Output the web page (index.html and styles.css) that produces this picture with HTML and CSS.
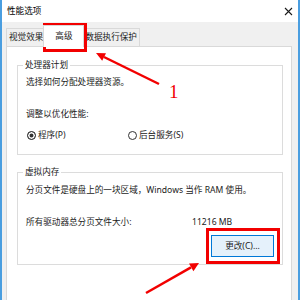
FILE: index.html
```html
<!DOCTYPE html>
<html lang="zh-CN">
<head>
    <meta charset="UTF-8">
    <title>性能选项</title>
<link rel="stylesheet" href="styles.css">
</head>
<body>
    <div class="window">
        <div class="titlebar">
            <span class="title">性能选项</span>
            <svg class="close" width="9" height="9" viewBox="0 0 9 9">
                <path d="M1 1 L8 8 M8 1 L1 8" stroke="#1a1a1a" stroke-width="1.1" fill="none"/>
            </svg>
        </div>
        <div class="content">
            <div class="tabs">
                <span class="tab">视觉效果</span>
                <span class="tab active">高级</span>
                <span class="tab">数据执行保护</span>
            </div>
            <div class="panel">
                <div class="group">
                    <span class="group-title">处理器计划</span>
                    <p class="line first">选择如何分配处理器资源。</p>
                    <p class="line">调整以优化性能:</p>
                    <div class="radios">
                        <label class="radio"><span class="dot checked"></span>程序(P)</label>
                        <label class="radio"><span class="dot"></span>后台服务(S)</label>
                    </div>
                </div>
                <div class="group memory">
                    <span class="group-title">虚拟内存</span>
                    <p class="line first">分页文件是硬盘上的一块区域，Windows 当作 RAM 使用。</p>
                    <p class="line size"><span class="size-label">所有驱动器总分页文件大小:</span><span>11216 MB</span></p>
                    <div class="actions">
                        <button class="btn">更改(C)...</button>
                    </div>
                </div>
            </div>
        </div>
    </div>

    <!-- annotations drawn over the screenshot -->
    <div class="mark mark-tab"></div>
    <div class="mark mark-btn"></div>
    <span class="step">1</span>
    <svg class="arrows" width="200" height="300" viewBox="0 0 200 300">
        <line x1="159" y1="84" x2="104" y2="57" stroke="#f20000" stroke-width="2.5"/>
        <polygon points="96,53 106,53.2 102.2,60.8" fill="#f20000"/>
        <line x1="146" y1="293" x2="191" y2="267.4" stroke="#f20000" stroke-width="2.5"/>
        <polygon points="199,263 193.4,271.2 189,263.6" fill="#f20000"/>
    </svg>
</body>
</html>
```

FILE: styles.css
```css
* {
    margin: 0;
    padding: 0;
    box-sizing: border-box;
}
body {
    position: relative;
    width: 300px;
    height: 300px;
    overflow: hidden;
    font-family: "Noto Sans", "Noto Sans CJK SC", sans-serif;
    font-size: 8.6px;
    color: #1b1b1b;
    background: #f0f0f0;
}
.window {
    height: 300px;
    overflow: hidden;
    border-left: 2px solid #4a9ee0;
    border-right: 2px solid #4a9ee0;
    background: #f0f0f0;
}
.titlebar {
    position: relative;
    z-index: 3;
    display: flex;
    align-items: center;
    height: 22px;
    padding: 0 5px 0 5px;
    background: #fff;
    color: #000;
    line-height: 12px;
}
.title {
    flex: 1;
}
.close {
    display: block;
    flex: none;
}
.content {
    padding: 0 6px 0 4px;
}
.tabs {
    display: flex;
    align-items: flex-end;
    height: 24px;
}
.tab {
    min-width: 37px;
    height: 18px;
    padding: 0 2px;
    margin-right: -1px;
    border: 1px solid #d9d9d9;
    border-bottom: none;
    background: #f0f0f0;
    line-height: 17px;
    text-align: center;
    white-space: nowrap;
}
.tab.active {
    position: relative;
    z-index: 1;
    min-width: 41px;
    height: 22px;
    margin: 0 -2px -1px -2px;
    background: #fff;
    line-height: 21px;
}
.panel {
    height: 270px;
    padding: 18px 8px 0 10px;
    background: #fff;
    border: 1px solid #d9d9d9;
}
.group {
    padding: 0 8px 13px 8px;
    border: 1px solid #dcdcdc;
    line-height: 12px;
}
.group-title {
    display: block;
    width: max-content;
    margin: -7px 0 0 -3px;
    padding: 0 2px;
    background: #fff;
}
.line {
    margin-top: 20px;
    white-space: nowrap;
}
.line.first {
    margin-top: 5px;
}
.radios {
    display: flex;
    align-items: center;
    margin-top: 9px;
    padding-left: 1px;
}
.radio {
    display: flex;
    align-items: center;
    gap: 2px;
}
.radio:first-child {
    width: 101px;
}
.dot {
    width: 9px;
    height: 9px;
    border: 1px solid #333;
    border-radius: 50%;
    background: #fff;
}
.dot.checked {
    background: #333;
    box-shadow: inset 0 0 0 1.5px #fff;
}
.memory {
    margin-top: 17px;
    padding-bottom: 7px;
}
.memory .first {
    margin-top: 6px;
}
.size {
    display: flex;
}
.size-label {
    width: 166px;
}
.actions {
    display: flex;
    justify-content: flex-end;
    margin-top: 7px;
}
.btn {
    width: 63px;
    height: 22px;
    border: 1px solid #0078d7;
    background: #e5f1fb;
    font: inherit;
    color: #1b1b1b;
}
.mark {
    position: absolute;
    border: 3px solid #f20000;
}
.mark-tab {
    left: 43px;
    top: 23px;
    width: 44px;
    height: 29px;
}
.mark-btn {
    left: 206px;
    top: 228px;
    width: 74px;
    height: 36px;
}
.step {
    position: absolute;
    left: 169px;
    top: 82px;
    font-family: "Liberation Serif", serif;
    font-size: 19px;
    line-height: 1;
    color: #f20000;
}
.arrows {
    position: absolute;
    left: 0;
    top: 0;
    pointer-events: none;
}
```
